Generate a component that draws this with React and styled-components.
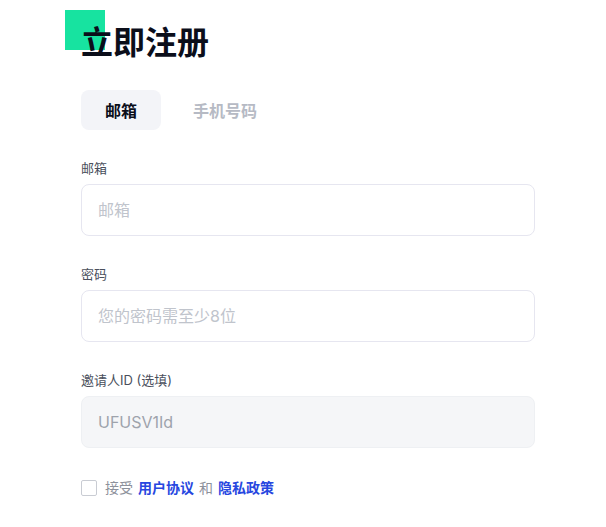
import React, { useState } from "react";
import styled, { createGlobalStyle } from "styled-components";

const GlobalStyle = createGlobalStyle`
  body {
    margin: 0;
    background: #ffffff;
    font-family: Inter, "Noto Sans CJK SC", sans-serif;
  }
`;

const Page = styled.div`
  width: 454px;
  padding: 23px 0 0 81px;
`;

const TitleWrap = styled.div`
  position: relative;
  z-index: 0;
`;

/* green block that sits behind the first character */
const Accent = styled.span`
  position: absolute;
  left: -16px;
  top: -13px;
  width: 40px;
  height: 40px;
  background: #17e3a0;
  z-index: -1;
`;

const Title = styled.h1`
  margin: 0;
  font-size: 32px;
  line-height: 40px;
  font-weight: 700;
  color: #0b0e1a;
`;

const Tabs = styled.div`
  display: flex;
  gap: 8px;
  margin-top: 27px;
`;

const Tab = styled.button`
  height: 40px;
  padding: 0 24px;
  border: none;
  border-radius: 8px;
  font-family: inherit;
  font-size: 16px;
  font-weight: 700;
  cursor: pointer;
  background: ${(p) => (p.$active ? "#f3f4f8" : "transparent")};
  color: ${(p) => (p.$active ? "#0b0e1a" : "#b6bac4")};
`;

const Form = styled.form`
  display: flex;
  flex-direction: column;
  gap: 28px;
  margin-top: 28px;
`;

const Field = styled.label`
  display: flex;
  flex-direction: column;
  gap: 6px;
`;

const Label = styled.span`
  font-size: 13px;
  line-height: 20px;
  color: #4a4f5c;
`;

const Input = styled.input`
  box-sizing: border-box;
  width: 100%;
  height: 52px;
  padding: 0 16px;
  border: 1px solid ${(p) => (p.$filled ? "#eef0f3" : "#e6e6f0")};
  border-radius: 8px;
  background: ${(p) => (p.$filled ? "#f5f6f8" : "#ffffff")};
  font-family: inherit;
  font-size: 16px;
  color: #9ea3ac;
  outline: none;

  &::placeholder {
    color: #c0c4cc;
  }
`;

const Agree = styled.div`
  display: flex;
  align-items: center;
  gap: 8px;
  margin-top: 30px;
  font-size: 14px;
  line-height: 20px;
  color: #8d919b;
`;

const Box = styled.span`
  box-sizing: border-box;
  width: 16px;
  height: 16px;
  border: 1px solid #c9ccd3;
  border-radius: 2px;
  background: #fff;
`;

const Link = styled.a`
  color: #2747e0;
  font-weight: 600;
  text-decoration: none;
  margin: 0 5px;
`;

export default function App() {
  const [tab, setTab] = useState("email");

  return (
    <Page>
      <GlobalStyle />
      <TitleWrap>
        <Accent />
        <Title>立即注册</Title>
      </TitleWrap>

      <Tabs>
        <Tab $active={tab === "email"} onClick={() => setTab("email")}>
          邮箱
        </Tab>
        <Tab $active={tab === "phone"} onClick={() => setTab("phone")}>
          手机号码
        </Tab>
      </Tabs>

      <Form onSubmit={(e) => e.preventDefault()}>
        <Field>
          <Label>邮箱</Label>
          <Input placeholder="邮箱" />
        </Field>
        <Field>
          <Label>密码</Label>
          <Input type="password" placeholder="您的密码需至少8位" />
        </Field>
        <Field>
          <Label>邀请人ID (选填)</Label>
          <Input $filled defaultValue="UFUSV1Id" readOnly />
        </Field>
      </Form>

      <Agree>
        <Box />
        <span>
          接受<Link href="#">用户协议</Link>和<Link href="#">隐私政策</Link>
        </span>
      </Agree>
    </Page>
  );
}
